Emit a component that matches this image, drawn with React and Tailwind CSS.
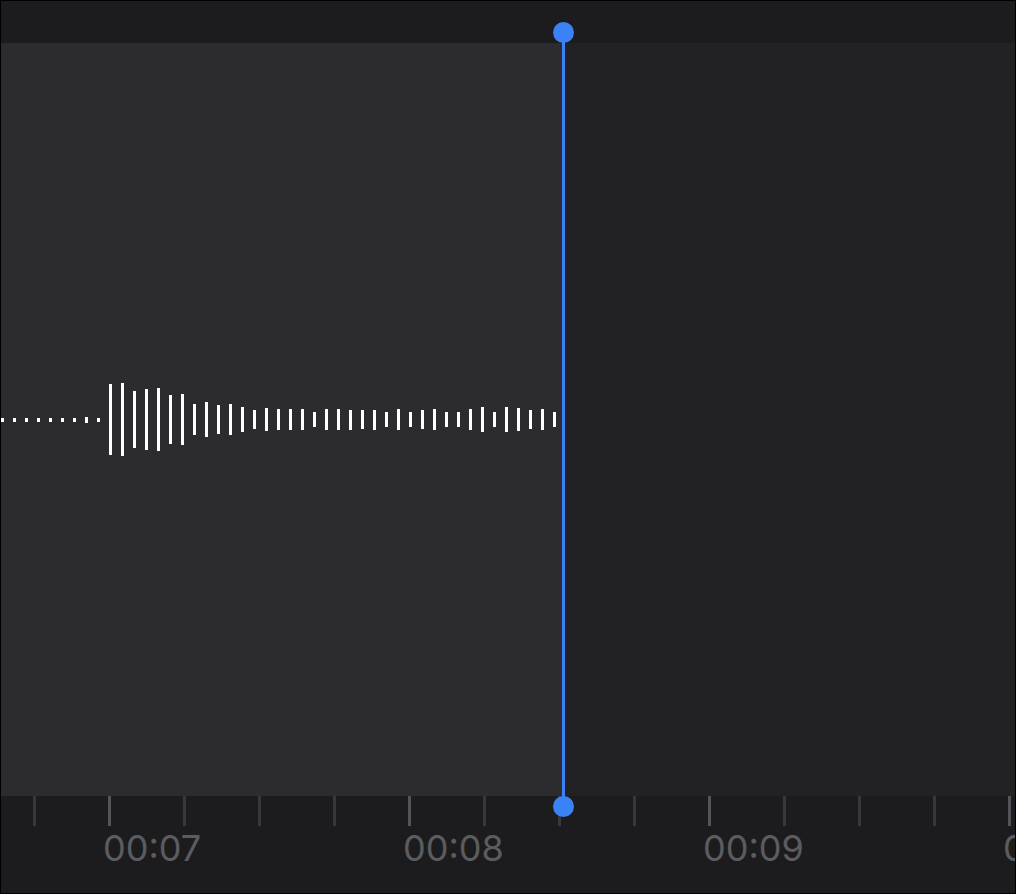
import React from "react";

const dots = [4, 4, 4, 4, 4, 4, 4, 6, 4];
const bars = [
  71, 73, 57, 61, 63, 49, 51, 31, 35, 29, 31, 25, 19, 23, 21, 21,
  21, 15, 21, 21, 20, 19, 20, 15, 21, 15, 19, 21, 15, 15, 21, 25, 15, 25, 23, 19, 21, 15,
];

const labels = { 1: "00:07", 5: "00:08", 9: "00:09", 13: "00:10" };

export default function App() {
  return (
    <div className="relative w-[1016px] h-[894px] border border-black bg-[#1c1c1e] overflow-hidden flex flex-col" style={{ fontFamily: "Inter, 'Open Sans', sans-serif" }}>
      <div className="h-[42px] shrink-0 bg-[#1c1c1e]" />
      <div className="h-[753px] shrink-0 flex">
        <div className="w-[562px] shrink-0 bg-[#2c2c2e] flex items-center gap-[9px]">
          {dots.map((h, i) => (
            <div key={"d" + i} className="w-[3px] shrink-0 bg-white" style={{ height: h }} />
          ))}
          {bars.map((h, i) => (
            <div key={"b" + i} className="w-[3px] shrink-0 bg-white" style={{ height: h }} />
          ))}
        </div>
        <div className="flex-1 bg-[#222224]" />
      </div>
      <div className="h-[97px] shrink-0 bg-[#1c1c1e] flex pl-[32px]">
        {Array.from({ length: 14 }).map((_, i) => {
          const major = labels[i] !== undefined;
          return (
            <div key={i} className="w-[75px] shrink-0 flex flex-col">
              <div className={"w-[3px] h-[30px] " + (major ? "bg-[#545458]" : "bg-[#38383a]")} />
              {major && (
                <div className="ml-[-5px] mt-0 text-[36px] leading-[44px] font-normal text-[#5c5c60] whitespace-nowrap">
                  {labels[i]}
                </div>
              )}
            </div>
          );
        })}
      </div>
      <div className="absolute left-[561px] top-[31px] w-[3px] h-[775px] bg-[#3b82f6]" />
      <div className="absolute left-[552px] top-[21px] w-[21px] h-[21px] rounded-full bg-[#3b82f6]" />
      <div className="absolute left-[552px] top-[795px] w-[21px] h-[21px] rounded-full bg-[#3b82f6]" />
    </div>
  );
}
